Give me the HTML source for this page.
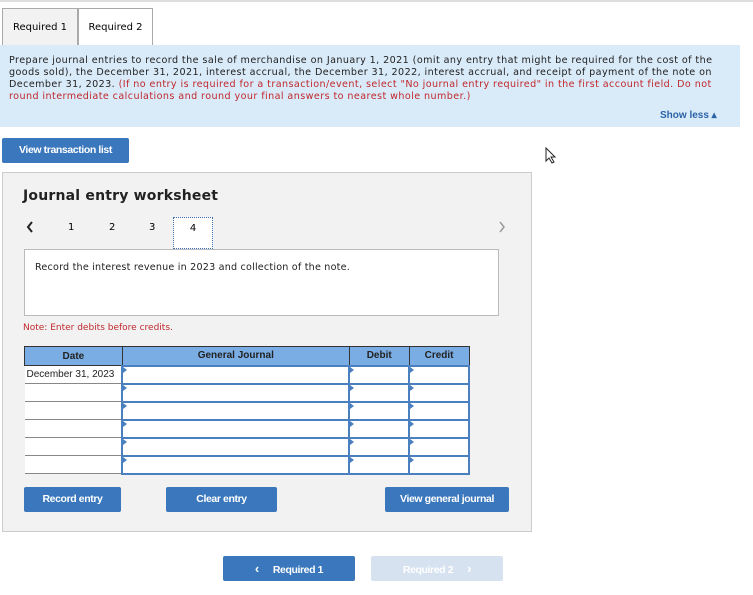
<!DOCTYPE html><html><head><style>
body{margin:0;width:753px;height:595px;background:#fff;font-family:"DejaVu Sans",Verdana,sans-serif;position:relative;overflow:hidden}
.a{position:absolute}
.tab{position:absolute;top:8px;height:37px;border:1px solid #aaa;border-bottom:none;font-size:10px;line-height:37px;text-align:center;box-sizing:border-box}
.btn{position:absolute;background:#3a77bc;color:#fff;font-family:"Liberation Sans",Arial,sans-serif;font-weight:bold;font-size:10.5px;letter-spacing:-0.4px;text-align:center;border-radius:2px;height:25px;line-height:25px}
table{border-collapse:collapse;font-family:"Liberation Sans",Arial,sans-serif;font-size:10px}
td,th{padding:0;height:18px;box-sizing:border-box}
th{background:#7aade4;border:1px solid #333;font-weight:bold;color:#222;height:19px}
td.d{border-bottom:1px solid #888;background:#fff;padding-left:2px;color:#222}
td.i{border:2px solid #4a80c0;background:#fff;position:relative;height:17.5px}
td.i:before{content:"";position:absolute;left:0;top:0;border-left:4px solid #4a80c0;border-top:3px solid transparent;border-bottom:3px solid transparent}
</style></head><body>
<div class="a" style="left:0;top:0;width:753px;height:2px;background:#ddd"></div>
<div class="tab" style="left:2px;width:76px;background:#f2f2f2">Required 1</div>
<div class="tab" style="left:78px;width:75px;background:#fff">Required 2</div>
<div class="a" style="left:0;top:45px;width:740px;height:82px;background:#d9eaf8"></div>
<div class="a" style="left:9px;top:55px;width:716px;font-size:9.6px;line-height:12px;color:#222;letter-spacing:0.42px">Prepare journal entries to record the sale of merchandise on January 1, 2021 (omit any entry that might be required for the cost of the goods sold), the December 31, 2021, interest accrual, the December 31, 2022, interest accrual, and receipt of payment of the note on December 31, 2023. <span style="color:#c0282d">(If no entry is required for a transaction/event, select "No journal entry required" in the first account field. Do not round intermediate calculations and round your final answers to nearest whole number.)</span></div>
<div class="a" style="left:660px;top:110px;font-family:'Liberation Sans',Arial;font-weight:bold;font-size:10px;color:#2b63a8">Show less ▴</div>
<div class="btn" style="left:2px;top:138px;width:127px">View transaction list</div>
<svg class="a" style="left:544px;top:147px" width="14" height="18"><path d="M2 1 L2 14 L5 11 L8 16 L10 15 L7 10 L11 10 Z" fill="#fff" stroke="#222" stroke-width="1"/></svg>
<div class="a" style="left:2px;top:172px;width:528px;height:358px;background:#f2f2f2;border:1px solid #ccc"></div>
<div class="a" style="left:23px;top:188px;font-size:14px;font-weight:bold;color:#222;letter-spacing:0.2px">Journal entry worksheet</div>
<svg class="a" style="left:25px;top:220px" width="10" height="14"><path d="M7 2 L3 7 L7 12" fill="none" stroke="#222" stroke-width="2"/></svg>
<div class="a" style="left:68px;top:222px;font-size:10px">1</div>
<div class="a" style="left:109px;top:222px;font-size:10px">2</div>
<div class="a" style="left:149px;top:222px;font-size:10px">3</div>
<div class="a" style="left:173px;top:217px;width:40px;height:32px;background:#fff;border:1px dotted #3a6fb0;box-sizing:border-box;font-size:10px;text-align:center;line-height:22px">4</div>
<svg class="a" style="left:497px;top:220px" width="10" height="14"><path d="M3 2 L7 7 L3 12" fill="none" stroke="#999" stroke-width="1.5"/></svg>
<div class="a" style="left:24px;top:249px;width:475px;height:67px;background:#fff;border:1px solid #bbb;box-sizing:border-box"></div>
<div class="a" style="left:35px;top:262px;font-size:9.6px;color:#222;letter-spacing:0.2px">Record the interest revenue in 2023 and collection of the note.</div>
<div class="a" style="left:23px;top:323px;font-size:9px;color:#c0282d">Note: Enter debits before credits.</div>
<table class="a" style="left:24px;top:346px;width:446px">
<tr><th style="width:98px">Date</th><th style="width:228px">General Journal</th><th style="width:60px">Debit</th><th style="width:60px">Credit</th></tr>
<tr><td class="d">December 31, 2023</td><td class="i"></td><td class="i"></td><td class="i"></td></tr>
<tr><td class="d"></td><td class="i"></td><td class="i"></td><td class="i"></td></tr>
<tr><td class="d"></td><td class="i"></td><td class="i"></td><td class="i"></td></tr>
<tr><td class="d"></td><td class="i"></td><td class="i"></td><td class="i"></td></tr>
<tr><td class="d"></td><td class="i"></td><td class="i"></td><td class="i"></td></tr>
<tr><td class="d"></td><td class="i"></td><td class="i"></td><td class="i"></td></tr>
</table>
<div class="btn" style="left:24px;top:487px;width:97px">Record entry</div>
<div class="btn" style="left:166px;top:487px;width:111px">Clear entry</div>
<div class="btn" style="left:385px;top:487px;width:124px">View general journal</div>
<div class="btn" style="left:223px;top:556px;width:132px"><span style="margin-right:14px;font-size:13px">‹</span>Required 1</div>
<div class="btn" style="left:371px;top:556px;width:132px;background:#d6e2f0">Required 2<span style="margin-left:14px;font-size:13px">›</span></div>
</body></html>
